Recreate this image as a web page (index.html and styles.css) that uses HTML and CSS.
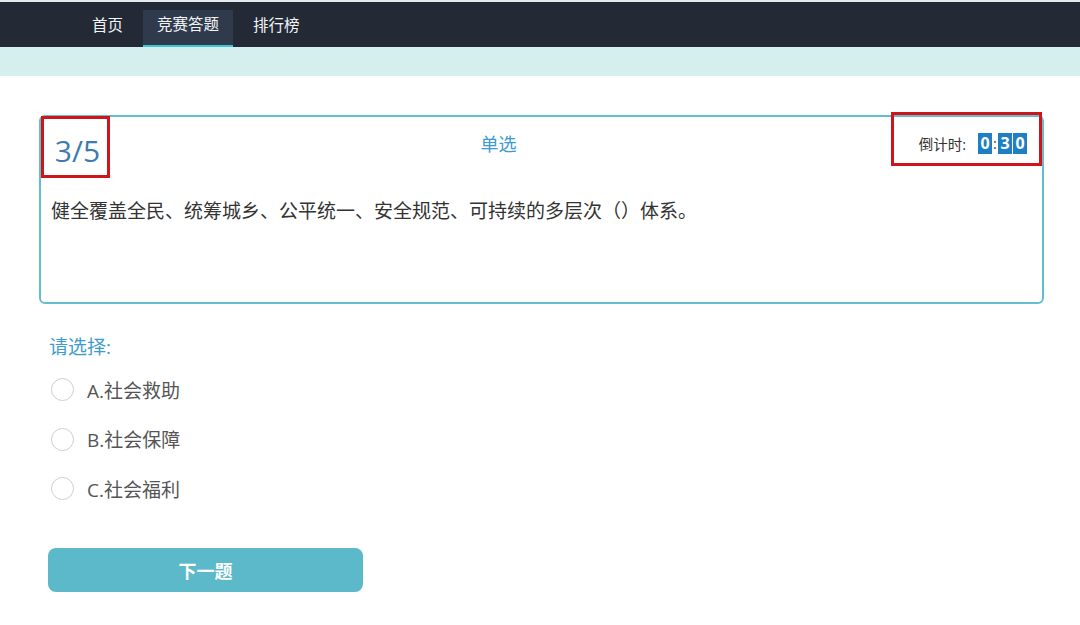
FILE: index.html
```html
<!DOCTYPE html>
<html lang="zh-CN">
<head>
    <meta charset="UTF-8">
    <meta name="viewport" content="width=device-width, initial-scale=1.0">
    <title>竞赛答题</title>
    <link rel="stylesheet" href="styles.css">
</head>
<body>

    <nav class="topbar">
        <ul class="menu">
            <li>首页</li>
            <li class="active">竞赛答题</li>
            <li>排行榜</li>
        </ul>
    </nav>
    <div class="band"></div>

    <main class="quiz">
        <div class="question-box">
            <div class="question-head">
                <div class="progress">3/5</div>
                <div class="qtype">单选</div>
                <div class="countdown">
                    <span class="label">倒计时:</span>
                    <span class="digit">0</span><span class="colon">:</span><span class="digit">3</span><span class="digit">0</span>
                </div>
            </div>
            <p class="question-text">健全覆盖全民、统筹城乡、公平统一、安全规范、可持续的多层次（）体系。</p>
        </div>

        <h4 class="choose">请选择:</h4>
        <ul class="options">
            <li><span class="radio"></span>A.社会救助</li>
            <li><span class="radio"></span>B.社会保障</li>
            <li><span class="radio"></span>C.社会福利</li>
        </ul>

        <button class="next-btn">下一题</button>
    </main>

</body>
</html>
```

FILE: styles.css
```css
body {
    margin: 0;
    font-family: "Open Sans", "Noto Sans CJK SC", sans-serif;
    background: #fff;
    color: #333;
}
.topbar {
    border-top: 2px solid #e6eaee;
    background-color: #232a36;
    height: 45px;
}
.menu {
    list-style: none;
    margin: 0;
    padding: 0 0 0 78px;
    display: flex;
    gap: 6px;
    height: 100%;
}
.menu li {
    padding: 0 14px;
    display: flex;
    align-items: center;
    font-size: 15.5px;
    color: #f2f4f6;
    box-sizing: border-box;
}
.menu li.active {
    background-color: #2f3b4d;
    margin-top: 8px;
    padding-bottom: 8px;
    border-bottom: 2px solid #3fc4d6;
}
.band {
    height: 29px;
    background-color: #d5eeee;
}
.quiz {
    padding: 39px 36px 0 39px;
}
.question-box {
    border: 2px solid #62bfcf;
    border-radius: 6px;
    height: 185px;
}
.question-head {
    display: flex;
    align-items: flex-start;
}
.progress {
    width: 59px;
    height: 50px;
    padding: 6px 0 0 4px;
    margin-top: -1px;
    border: 3px solid #d0141c;
    font-size: 30px;
    color: #3d7bb0;
    display: flex;
    align-items: center;
    justify-content: center;
}
.qtype {
    flex: 1;
    text-align: center;
    font-size: 18px;
    color: #3b9ad2;
    padding-top: 13px;
    padding-right: 4px;
}
.countdown {
    width: 151px;
    height: 54px;
    margin-top: -5px;
    border: 3px solid #d0141c;
    display: flex;
    align-items: center;
    justify-content: flex-end;
    padding: 8px 12px 0 0;
    box-sizing: border-box;
    font-size: 14.5px;
}
.countdown .label {
    margin-right: 11px;
    color: #333;
}
.digit {
    background-color: #1e7fc4;
    color: #fff;
    font-weight: bold;
    font-size: 16px;
    width: 14px;
    height: 21px;
    line-height: 21px;
    text-align: center;
    margin-left: 1px;
}
.colon {
    color: #333;
    width: 4px;
    text-align: center;
    margin-left: 1px;
}
.question-text {
    margin: 18px 0 0 10px;
    font-size: 19px;
    color: #333;
}
.choose {
    margin: 28px 0 0 10px;
    font-size: 19px;
    font-weight: normal;
    color: #3d9bd0;
}
.options {
    list-style: none;
    margin: 5px 0 0 12px;
    padding: 0;
}
.options li {
    display: flex;
    align-items: center;
    height: 49.5px;
    font-size: 19px;
    color: #555;
}
.radio {
    width: 21px;
    height: 21px;
    border: 1px solid #c8d0d8;
    border-radius: 50%;
    margin-right: 13px;
}
.next-btn {
    margin: 34px 0 0 9px;
    width: 315px;
    height: 44px;
    border: none;
    border-radius: 8px;
    background-color: #5bb9ca;
    color: #fff;
    font-family: "Noto Sans CJK SC", sans-serif;
    font-size: 18px;
    font-weight: bold;
}
```
